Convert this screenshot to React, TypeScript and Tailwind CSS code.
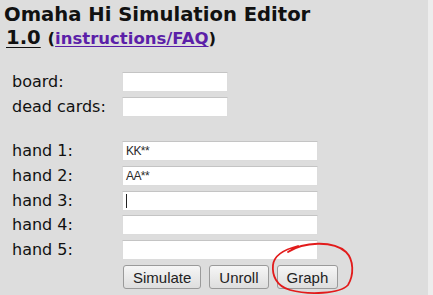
import React from "react";

const Field = ({ label, value, wide, cursor }: { label: string; value?: string; wide?: boolean; cursor?: boolean }) => (
  <div className="flex items-center h-[24.6px]">
    <div className="w-[110px] text-[16px] leading-none text-[#111]">{label}</div>
    <div
      className={`${wide ? "w-[196px]" : "w-[106px]"} h-[20px] bg-white border border-[#dcdcdc] border-t-[#c4c4c4] flex items-center px-[3px] ${cursor ? "border-[#b9cde0]" : ""}`}
      style={{ fontFamily: '"Liberation Sans", Arial, sans-serif' }}
    >
      {value ? <span className="text-[12px] text-[#2a2a2a] tracking-[-0.6px]">{value}</span> : null}
      {cursor ? <span className="block w-[1px] h-[14px] bg-[#222]" /> : null}
    </div>
  </div>
);

const Btn = ({ children }: { children: React.ReactNode }) => (
  <button
    className="h-[24px] px-[9px] rounded-[3px] border border-[#9a9a9a] bg-gradient-to-b from-[#f6f6f6] to-[#dedede] text-[15px] text-[#222] leading-none"
    style={{ fontFamily: '"Liberation Sans", Arial, sans-serif' }}
  >
    {children}
  </button>
);

export default function App() {
  return (
    <div className="w-[433px] h-[295px] flex overflow-hidden" style={{ fontFamily: '"DejaVu Sans", Verdana, sans-serif' }}>
      <div className="relative w-[428px] h-full bg-[#dddddd]">
        <div className="pl-[4px] pt-[3px]">
          <div className="font-bold text-[19.6px] leading-[23px] text-[#111]">Omaha Hi Simulation Editor</div>
          <div className="font-bold text-[19.6px] leading-[23px] text-[#111] pl-[2px]">
            <span className="underline underline-offset-[3px]">1.0</span>{" "}
            <span className="text-[16.5px]">
              (<span className="text-[#5b1fa8] underline underline-offset-[2px]">instructions/FAQ</span>)
            </span>
          </div>
        </div>
        <div className="pl-[12px] pt-[20px]">
          <Field label="board:" />
          <Field label="dead cards:" />
          <div className="h-[20px]" />
          <Field label="hand 1:" value="KK**" wide />
          <Field label="hand 2:" value="AA**" wide />
          <Field label="hand 3:" wide cursor />
          <Field label="hand 4:" wide />
          <Field label="hand 5:" wide />
          <div className="flex gap-[8px] pl-[111px] pt-[3px]">
            <Btn>Simulate</Btn>
            <Btn>Unroll</Btn>
            <Btn>Graph</Btn>
          </div>
        </div>
        <svg className="absolute left-[268px] top-[240px]" width="90" height="55" viewBox="0 0 90 55" fill="none">
          <path
            d="M20 12 C 35 2, 65 0, 78 12 C 86 20, 86 35, 80 45 C 72 54, 40 55, 22 50 C 8 46, 4 35, 5 25 C 6 16, 14 10, 30 6"
            stroke="#e21b1b"
            strokeWidth="1.8"
            strokeLinecap="round"
          />
        </svg>
      </div>
      <div className="flex-1 h-full bg-[#ededed]" />
    </div>
  );
}
